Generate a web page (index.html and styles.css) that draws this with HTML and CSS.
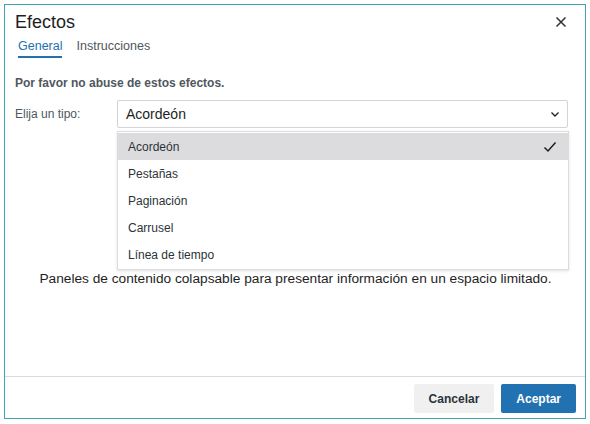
FILE: index.html
```html
<!DOCTYPE html>
<html lang="es">
<head>
    <meta charset="UTF-8">
    <title>Efectos</title>
    <link rel="stylesheet" href="styles.css">
</head>
<body>
    <div class="dialog">
        <div class="header">
            <h1 class="title">Efectos</h1>
            <button class="close" aria-label="Cerrar">
                <svg width="14" height="14" viewBox="0 0 14 14"><path d="M2.5 2.5l9 9M11.5 2.5l-9 9" stroke="#2c3338" stroke-width="1.5" fill="none"/></svg>
            </button>
        </div>
        <div class="tabs">
            <span class="tab active">General</span>
            <span class="tab">Instrucciones</span>
        </div>
        <div class="body">
            <p class="warning">Por favor no abuse de estos efectos.</p>
            <div class="field">
                <label class="field-label">Elija un tipo:</label>
                <div class="select-wrap">
                    <div class="select">
                        <span>Acordeón</span>
                        <svg width="12" height="12" viewBox="0 0 12 12"><path d="M2.5 4.5l3.5 3.5 3.5-3.5" stroke="#1e1e1e" stroke-width="1.3" fill="none"/></svg>
                    </div>
                    <ul class="menu">
                        <li class="selected">Acordeón
                            <svg width="16" height="16" viewBox="0 0 16 16"><path d="M2.5 8.5l3.5 3.5 7.5-8.5" stroke="#1e1e1e" stroke-width="1.5" fill="none"/></svg>
                        </li>
                        <li>Pestañas</li>
                        <li>Paginación</li>
                        <li>Carrusel</li>
                        <li>Línea de tiempo</li>
                    </ul>
                </div>
            </div>
            <p class="description">Paneles de contenido colapsable para presentar información en un espacio limitado.</p>
        </div>
        <div class="footer">
            <button class="btn btn-secondary">Cancelar</button>
            <button class="btn btn-primary">Aceptar</button>
        </div>
    </div>
</body>
</html>
```

FILE: styles.css
```css
body {
    margin: 0;
    padding: 4px;
    background: #fff;
    font-family: "Liberation Sans", Arial, sans-serif;
    color: #1e1e1e;
}
.dialog {
    width: 580px;
    height: 413px;
    border: 1.5px solid #3fa6b0;
    display: flex;
    flex-direction: column;
    box-sizing: content-box;
}
.header {
    display: flex;
    justify-content: space-between;
    align-items: center;
    padding: 6px 14px 0 10px;
}
.title {
    margin: 0;
    font-size: 18px;
    font-weight: 400;
    line-height: 22px;
}
.close {
    background: none;
    border: none;
    padding: 0;
    width: 20px;
    height: 20px;
    display: flex;
    align-items: center;
    justify-content: center;
    cursor: pointer;
}
.tabs {
    display: flex;
    gap: 14px;
    padding: 6px 0 0 13px;
}
.tab {
    font-size: 12.5px;
    color: #50575e;
    padding-bottom: 3px;
    border-bottom: 2px solid transparent;
}
.tab.active {
    color: #2271b1;
    border-bottom-color: #2271b1;
}
.body {
    flex: 1;
    padding: 0 17px 0 10px;
}
.warning {
    margin: 18px 0 0;
    font-size: 12px;
    font-weight: 700;
    color: #50575e;
}
.field {
    display: flex;
    align-items: center;
    margin-top: 10px;
}
.field-label {
    width: 102px;
    font-size: 12px;
    color: #50575e;
}
.select-wrap {
    flex: 1;
    position: relative;
}
.select {
    height: 26px;
    border: 1px solid #d4d4d6;
    border-radius: 2px;
    display: flex;
    justify-content: space-between;
    align-items: center;
    padding: 0 6px 0 8px;
    font-size: 14px;
}
.menu {
    position: absolute;
    top: 31px;
    left: 0;
    right: -1px;
    margin: 0;
    padding: 1px 0;
    list-style: none;
    background: #fff;
    border: 1px solid #dcdcde;
    box-shadow: 0 1px 3px rgba(0, 0, 0, 0.12);
    z-index: 2;
}
.menu li {
    height: 27px;
    display: flex;
    align-items: center;
    justify-content: space-between;
    padding: 0 10px 0 10px;
    font-size: 12px;
    color: #2c3338;
}
.menu li.selected {
    background: #dcdcde;
}
.description {
    margin: 143px 0 0;
    padding-left: 8px;
    text-align: center;
    font-size: 13.7px;
}
.footer {
    border-top: 1px solid #dcdcde;
    display: flex;
    justify-content: flex-end;
    gap: 7px;
    padding: 7px 9px 5px;
}
.btn {
    height: 29px;
    border: none;
    border-radius: 2px;
    font-family: inherit;
    font-size: 12px;
    font-weight: 700;
    padding: 0 15px;
    cursor: pointer;
}
.btn-secondary {
    background: #f0f0f1;
    color: #2c3338;
}
.btn-primary {
    background: #2271b1;
    color: #fff;
}
```
